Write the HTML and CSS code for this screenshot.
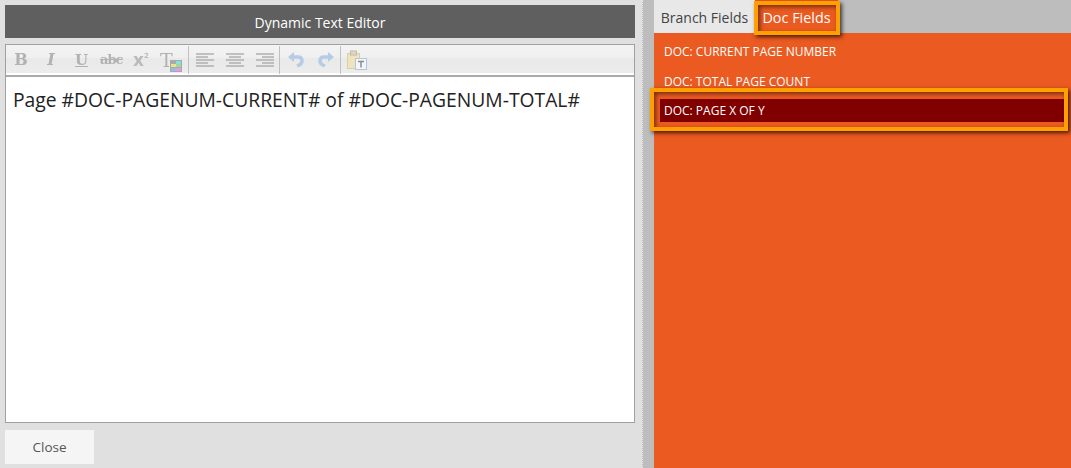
FILE: index.html
```html
<!DOCTYPE html>
<html lang="en">

<head>
    <meta charset="UTF-8">
    <meta name="viewport" content="width=device-width, initial-scale=1.0">
    <title>Dynamic Text Editor</title>
    <link rel="stylesheet" href="styles.css">
</head>

<body>
    <div class="container">
        <div class="editor-pane">
            <div class="title">Dynamic Text Editor</div>
            <div class="editor">
                <div class="toolbar">
                    <div class="tool-group group-text">
                        <span class="tool tool-b">B</span>
                        <span class="tool tool-i">I</span>
                        <span class="tool tool-u">U</span>
                        <span class="tool tool-s">abc</span>
                        <span class="tool tool-x">x<sup>2</sup></span>
                        <span class="tool tool-t">T
                            <svg class="swatch" viewBox="0 0 12 12">
                                <rect width="12" height="12" fill="#a9a9a9"/>
                                <rect x="6" y="1" width="5" height="3" fill="#7fe3dc"/>
                                <rect x="1" y="4" width="5" height="3" fill="#e6e48f"/>
                                <rect x="6" y="4" width="5" height="3" fill="#9fd8a0"/>
                                <rect x="1" y="8" width="5" height="3" fill="#9fb6e8"/>
                                <rect x="6" y="8" width="5" height="3" fill="#e59ae6"/>
                            </svg>
                        </span>
                    </div>
                    <div class="tool-group group-align">
                        <svg class="icon" viewBox="0 0 18 14"><path d="M0 1h18M0 4h12M0 7h18M0 10h12M0 13h18"/></svg>
                        <svg class="icon" viewBox="0 0 18 14"><path d="M0 1h18M3 4h12M0 7h18M3 10h12M0 13h18"/></svg>
                        <svg class="icon" viewBox="0 0 18 14"><path d="M0 1h18M6 4h12M0 7h18M6 10h12M0 13h18"/></svg>
                    </div>
                    <div class="tool-group group-history">
                        <svg class="icon-arrow" viewBox="0 0 16 15">
                            <path class="arrow-line" d="M4 5h6c3 0 4 2 4 4 0 2-2 4-5 5"/>
                            <path class="arrow-head" d="M0 5l6-5v10z"/>
                        </svg>
                        <svg class="icon-arrow" viewBox="0 0 16 15">
                            <path class="arrow-line" d="M12 5H6C3 5 2 7 2 9c0 2 2 4 5 5"/>
                            <path class="arrow-head" d="M16 5l-6-5v10z"/>
                        </svg>
                    </div>
                    <div class="tool-group-last">
                        <svg class="icon-paste" viewBox="0 0 20 20">
                            <rect x="0.500" y="3.500" width="12" height="15" fill="#eee3bd" stroke="#d8cfb0"/>
                            <rect x="3.500" y="1" width="6" height="4" fill="#dcd7c8" stroke="#c0bbac"/>
                            <rect x="8.500" y="8.500" width="11" height="11" fill="#f2f5fa" stroke="#b5c6dc"/>
                            <path d="M11 11.500h6M14 11.500v6" stroke="#8c8c8c" stroke-width="1.500" fill="none"/>
                        </svg>
                    </div>
                </div>
                <div class="content">Page #DOC-PAGENUM-CURRENT# of #DOC-PAGENUM-TOTAL#</div>
            </div>
            <div class="button-container">
                <button type="button">Close</button>
            </div>
        </div>

        <div class="splitter"></div>

        <div class="fields-pane">
            <div class="tabs">
                <div class="tab">Branch Fields</div>
                <div class="tab tab-active">Doc Fields</div>
            </div>
            <div class="field-list">
                <div class="field">DOC: CURRENT PAGE NUMBER</div>
                <div class="field">DOC: TOTAL PAGE COUNT</div>
                <div class="field field-selected">DOC: PAGE X OF Y</div>
            </div>
            <div class="callout callout-tab"></div>
            <div class="callout callout-row"></div>
        </div>
    </div>
</body>

</html>
```

FILE: styles.css
```css
*{
    box-sizing: border-box;
    padding: 0;
    margin: 0;
}

body{
    font-family: "Open Sans", "Noto Sans", sans-serif;
    overflow: hidden;
}

.container{
    display: flex;
    width: 1071px;
    height: 468px;
    overflow: hidden;
}

.editor-pane{
    display: flex;
    flex-direction: column;
    width: 642px;
    padding: 5px 7px 0 5px;
    background-color: #e0e0e0;
}

.title{
    height: 33px;
    line-height: 35px;
    text-align: center;
    font-size: 14px;
    color: #fff;
    background-color: #5f5f5f;
}

.editor{
    display: flex;
    flex-direction: column;
    height: 379px;
    margin-top: 6px;
    border: 1px solid #a0a0a0;
    background-color: #fff;
}

.toolbar{
    display: flex;
    align-items: center;
    height: 32px;
    padding: 1px 0 2px 0;
    border-bottom: 2px solid #ababab;
    background: linear-gradient(#f3f3f3 0, #efefef 44%, #e9e9e9 45%, #ececec 92%, #fff 92%, #fff 100%);
}

.tool-group{
    display: flex;
    align-items: center;
    height: 28px;
    border-right: 1px solid #c0c0c0;
}

.group-text{
    width: 183px;
    padding-left: 7px;
}

.group-align{
    width: 91px;
    padding-left: 7px;
    gap: 12px;
}

.group-history{
    width: 61px;
    padding-left: 8px;
    gap: 14px;
}

.tool-group-last{
    display: flex;
    padding-left: 6px;
}

.tool{
    position: relative;
    flex: none;
    text-align: center;
    font-family: "DejaVu Serif", serif;
    line-height: 24px;
    color: #b2b2b2;
    filter: blur(0.3px);
}

.tool-b{
    width: 16px;
    font-weight: bold;
    font-size: 16px;
}

.tool-i{
    width: 14px;
    margin-left: 15px;
    font-size: 16px;
    font-style: italic;
    font-weight: bold;
}

.tool-u{
    width: 13px;
    margin-left: 17px;
    font-size: 15px;
    font-weight: bold;
    text-decoration: underline;
}

.tool-s{
    width: 22px;
    margin-left: 12px;
    font-size: 13px;
    letter-spacing: -1px;
    font-weight: bold;
    text-decoration: line-through;
}

.tool-x{
    width: 17px;
    margin-left: 11px;
    font-family: "DejaVu Sans", sans-serif;
    font-size: 17px;
    font-weight: bold;
    text-align: left;
    color: #bababa;
}

.tool-x sup{
    font-size: 7px;
    line-height: 0;
    vertical-align: 8px;
}

.tool-t{
    width: 22px;
    margin-left: 10px;
    font-size: 19px;
    text-align: left;
}

.swatch{
    position: absolute;
    right: 0;
    bottom: 0;
    width: 12px;
    height: 12px;
}

.icon{
    width: 18px;
    height: 14px;
    fill: none;
    stroke: #b0b0b0;
    stroke-width: 1.500;
}

.icon-arrow{
    width: 16px;
    height: 15px;
    filter: blur(0.3px);
}

.arrow-line{
    fill: none;
    stroke: #b6cbe6;
    stroke-width: 3.500;
}

.arrow-head{
    fill: #b6cbe6;
}

.icon-paste{
    width: 20px;
    height: 20px;
    filter: blur(0.3px);
}

.content{
    flex: 1;
    padding: 10px 7px;
    font-size: 19.300px;
    line-height: 26px;
    color: #222;
}

.button-container{
    margin-top: 7px;
}

.button-container button{
    width: 89px;
    height: 34px;
    border: none;
    font-family: inherit;
    font-size: 13.500px;
    color: #555;
    background-color: #f5f5f5;
}

.splitter{
    width: 12px;
    border-left: 1px dotted #e8e8e8;
    background-color: #bdbdbd;
}

.fields-pane{
    position: relative;
    display: flex;
    flex-direction: column;
    flex: 1;
    background-color: #bdbdbd;
}

.tabs{
    display: flex;
    height: 33px;
}

.tab{
    width: 101px;
    padding-top: 8px;
    text-align: center;
    font-size: 14px;
    color: #444;
    background-color: #e8e8e8;
}

.tab-active{
    width: 83px;
    font-size: 14.400px;
    color: #fff;
    background-color: #eb5a20;
}

.field-list{
    flex: 1;
    padding: 6px 7px 0 6px;
    background-color: #eb5a20;
}

.field{
    height: 23px;
    margin-bottom: 7px;
    padding-left: 4px;
    line-height: 25px;
    font-size: 12px;
    color: #fff;
}

.field-selected{
    line-height: 23px;
    background-color: #800000;
}

.callout{
    position: absolute;
    border: 4px solid #ffa000;
    box-shadow: 2px 2px 4px rgba(0, 0, 0, 0.7), inset 2px 2px 4px rgba(0, 0, 0, 0.5);
}

.callout-tab{
    left: 100px;
    top: 1px;
    width: 86px;
    height: 34px;
}

.callout-row{
    left: -4px;
    top: 88px;
    width: 418px;
    height: 43px;
}
```
